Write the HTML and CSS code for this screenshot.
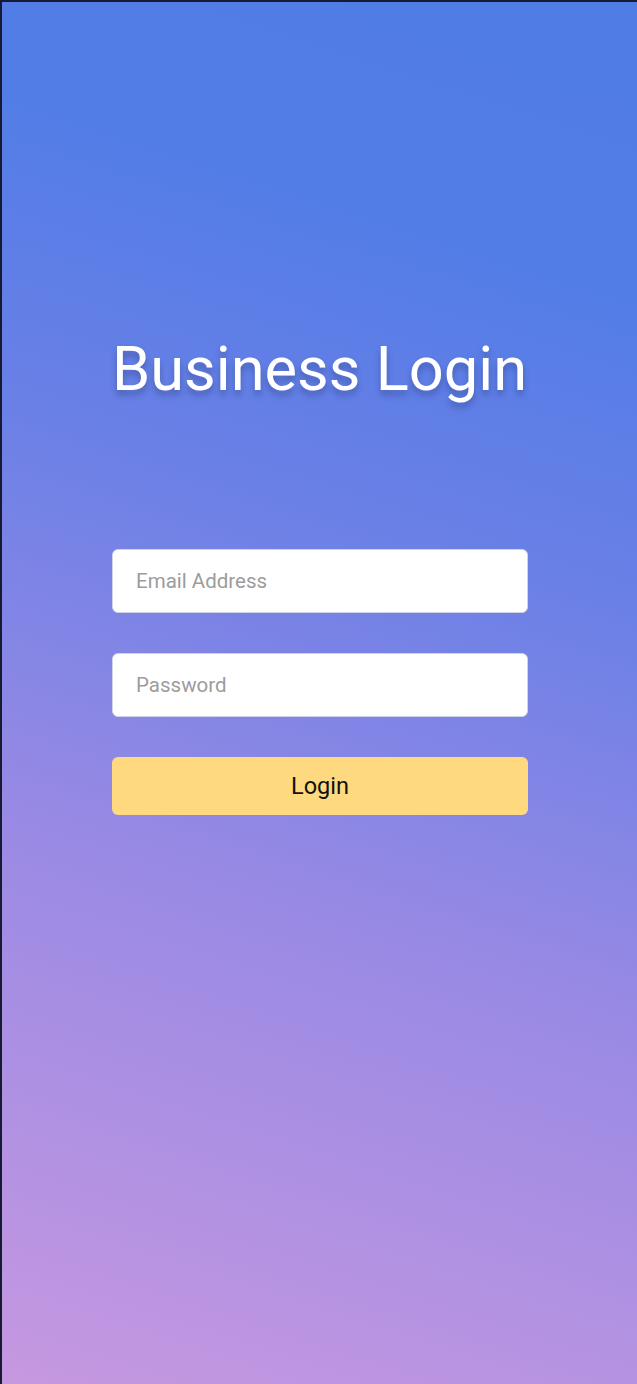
FILE: index.html
```html
<!DOCTYPE html>
<html>
<head>
<meta charset="utf-8">
<link rel="stylesheet" href="styles.css">
</head>
<body>
<div class="screen">
  <h1 class="title">Business Login</h1>
  <form class="form">
    <input class="field" type="email" placeholder="Email Address">
    <input class="field" type="password" placeholder="Password">
    <button class="btn" type="button">Login</button>
  </form>
</div>
</body>
</html>
```
FILE: styles.css
```css
html, body {
  margin: 0;
  padding: 0;
}
body {
  font-family: Roboto, "Liberation Sans", sans-serif;
}
.screen {
  box-sizing: border-box;
  width: 637px;
  height: 1384px;
  border-top: 2px solid #161a33;
  border-left: 2px solid #161a33;
  background: linear-gradient(18deg, #c698e0 0%, #9a8ae4 35%, #6a80e6 62%, #527de6 82%, #507ce6 100%);
  display: flex;
  flex-direction: column;
  align-items: center;
}
.title {
  margin: 331px 0 0 0;
  font-size: 61.4px;
  font-weight: 400;
  color: #ffffff;
  line-height: 72px;
  text-shadow: 0 5px 6px rgba(30, 40, 90, 0.35);
}
.form {
  margin-top: 144px;
  width: 416px;
  margin-left: 1px;
  display: flex;
  flex-direction: column;
  gap: 40px;
}
.field {
  box-sizing: border-box;
  height: 64px;
  border: 1px solid #cfd3e6;
  border-radius: 6px;
  background: #fff;
  padding: 0 23px;
  font-family: Roboto, "Liberation Sans", sans-serif;
  font-size: 20.5px;
  color: #333;
  outline: none;
}
.field::placeholder {
  color: #9c9c9c;
}
.btn {
  height: 58px;
  border: none;
  border-radius: 6px;
  background: #fed97f;
  font-family: Roboto, "Liberation Sans", sans-serif;
  font-size: 23.5px;
  color: #111;
}
```
